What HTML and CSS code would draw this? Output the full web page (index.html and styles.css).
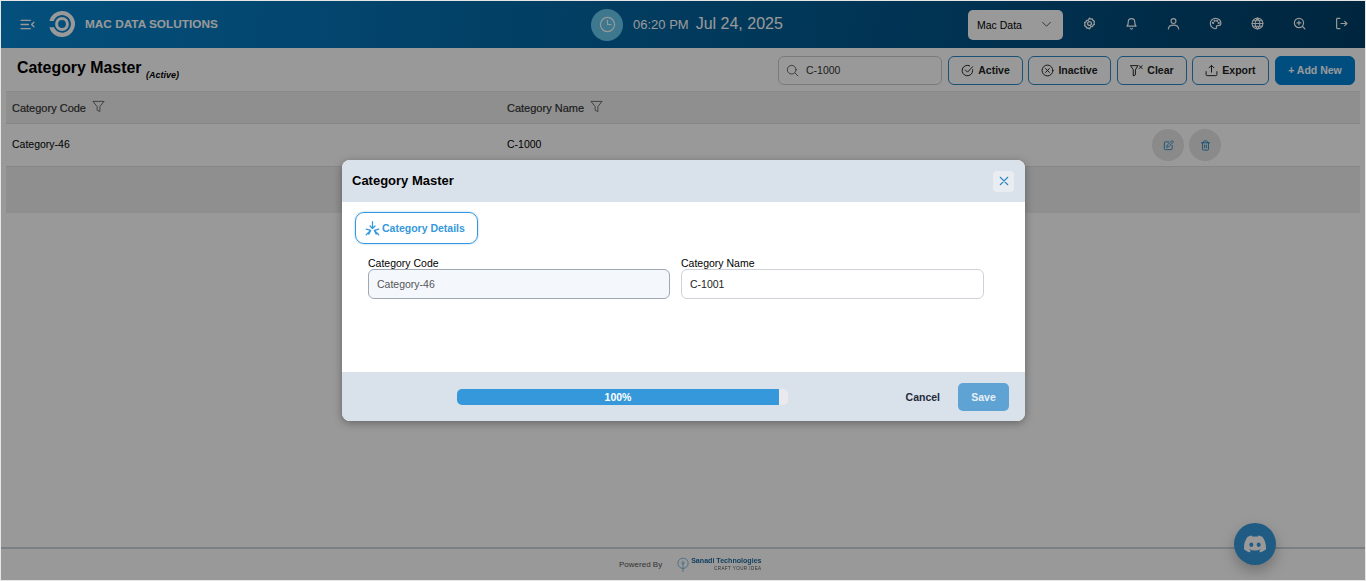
FILE: index.html
```html
<!doctype html>
<html lang="en">
<head>
  <meta charset="utf-8">
  <title>Category Master</title>
  <link rel="stylesheet" href="styles.css">
</head>
<body>
  <div class="app">
    <header class="topbar">
      <div class="brand">
        <svg class="menu-icon" viewBox="0 0 16 12" fill="none" stroke="currentColor" stroke-width="1.5" stroke-linecap="round" stroke-linejoin="round"><path d="M1 1.5h10M1 6h8M1 10.5h10M15 3.5 12.5 6l2.5 2.5"/></svg>
        <svg class="logo" viewBox="0 0 26 26"><path d="M13 0a13 13 0 1 1-12.6 16.2h4.6A8.8 8.8 0 1 0 4.8 10H.3A13 13 0 0 1 13 0z" fill="currentColor"/><circle cx="13" cy="13" r="5.4" fill="none" stroke="currentColor" stroke-width="3"/></svg>
        <span class="brand-name">MAC DATA SOLUTIONS</span>
      </div>
      <div class="clock">
        <span class="clock-badge">
          <svg viewBox="0 0 24 24" fill="none" stroke="currentColor" stroke-width="1.6" stroke-linecap="round" stroke-linejoin="round"><circle cx="12" cy="12" r="10"/><path d="M12 6v6h5"/></svg>
        </span>
        <span class="clock-time">06:20 PM</span>
        <span class="clock-date">Jul 24, 2025</span>
      </div>
      <div class="topbar-right">
        <div class="org-select">
          <span>Mac Data</span>
          <svg viewBox="0 0 12 8" fill="none" stroke="currentColor" stroke-width="1.1" stroke-linecap="round" stroke-linejoin="round"><path d="M1.5 1.5 6 6l4.5-4.5"/></svg>
        </div>
        <div class="top-icons">
          <svg viewBox="0 0 24 24" fill="none" stroke="currentColor" stroke-width="2.4" stroke-linejoin="round"><path d="M12 2l2.4 1.800 3-.2 1 2.700 2.600 1.500-.7 2.900.7 2.900-2.600 1.500-1 2.700-3-.2L12 22l-2.400-1.800-3 .2-1-2.700L3 16.200l.7-2.900L3 10.400 5.600 8.900l1-2.700 3 .2z"/><circle cx="12" cy="12" r="3.5"/></svg>
          <svg viewBox="0 0 24 24" fill="none" stroke="currentColor" stroke-width="2.2" stroke-linecap="round" stroke-linejoin="round"><path d="M6 9a6 6 0 0 1 12 0c0 6 2.5 8 2.5 8h-17S6 15 6 9z"/><path d="M10 21a2.2 2.2 0 0 0 4 0"/></svg>
          <svg viewBox="0 0 24 24" fill="none" stroke="currentColor" stroke-width="2.2" stroke-linecap="round" stroke-linejoin="round"><circle cx="12" cy="7.5" r="4.5"/><path d="M2.500 22c.5-4.500 4.500-7 9.500-7s9 2.500 9.500 7"/></svg>
          <svg viewBox="0 0 24 24" fill="none" stroke="currentColor" stroke-width="2.2" stroke-linecap="round" stroke-linejoin="round"><path d="M12 2.500c6 0 10 3.800 10 8.700 0 3.300-2.400 4.800-4.700 4.800h-2c-1.300 0-2 1.100-1.500 2.100.5 1.100.2 3.400-1.800 3.400-5.500 0-9.500-4.500-9.500-9.500s4-9.500 9.500-9.500z"/><circle cx="7.5" cy="11" r="1"/><circle cx="10.5" cy="7" r="1"/><circle cx="15" cy="7" r="1"/><circle cx="18" cy="11" r="1"/></svg>
          <svg viewBox="0 0 24 24" fill="none" stroke="currentColor" stroke-width="2" stroke-linecap="round" stroke-linejoin="round"><circle cx="12" cy="12" r="10"/><path d="M2 12h20M3.500 7h17M3.500 17h17M12 2c-6 6-6 14 0 20M12 2c6 6 6 14 0 20"/></svg>
          <svg viewBox="0 0 24 24" fill="none" stroke="currentColor" stroke-width="2.2" stroke-linecap="round" stroke-linejoin="round"><circle cx="11" cy="11" r="8.5"/><path d="M11 7.500v7M7.500 11h7M17.500 17.500l4.500 4.500"/></svg>
          <svg viewBox="0 0 24 24" fill="none" stroke="currentColor" stroke-width="2.2" stroke-linecap="round" stroke-linejoin="round"><path d="M9 2.500H4.500A1.500 1.500 0 0 0 3 4v16a1.500 1.500 0 0 0 1.500 1.500H9M11 12h11M18 8l4 4-4 4"/></svg>
        </div>
      </div>
    </header>

    <main class="content">
      <div class="toolbar">
        <h1 class="page-title">Category Master <small>(Active)</small></h1>
        <div class="actions">
          <div class="search">
            <svg viewBox="0 0 24 24" fill="none" stroke="currentColor" stroke-width="1.8" stroke-linecap="round"><circle cx="10.5" cy="10.5" r="8"/><path d="M16.500 16.500l5.500 5.500"/></svg>
            <span>C-1000</span>
          </div>
          <button class="btn btn-active">
            <svg viewBox="0 0 24 24" fill="none" stroke="currentColor" stroke-width="1.8" stroke-linecap="round" stroke-linejoin="round"><path d="M21.500 10.500V12A9.700 9.700 0 1 1 16 3.300"/><path d="M8 11l4 4 9.500-10"/></svg>
            Active
          </button>
          <button class="btn btn-inactive">
            <svg viewBox="0 0 24 24" fill="none" stroke="currentColor" stroke-width="1.8" stroke-linecap="round"><circle cx="12" cy="12" r="10"/><path d="M8.500 8.500l7 7M15.500 8.500l-7 7"/></svg>
            Inactive
          </button>
          <button class="btn btn-clear">
            <svg viewBox="0 0 24 24" fill="none" stroke="currentColor" stroke-width="1.8" stroke-linecap="round" stroke-linejoin="round"><path d="M1.500 3h13L10 11v9l-4 2V11zM17 3l5.500 5.500M22.500 3 17 8.500"/></svg>
            Clear
          </button>
          <button class="btn btn-export">
            <svg viewBox="0 0 24 24" fill="none" stroke="currentColor" stroke-width="1.8" stroke-linecap="round" stroke-linejoin="round"><path d="M12 15V2.500M7.500 7 12 2.500 16.500 7"/><path d="M2 14v5.500a2 2 0 0 0 2 2h16a2 2 0 0 0 2-2V14"/></svg>
            Export
          </button>
          <button class="btn btn-primary">+ Add New</button>
        </div>
      </div>

      <div class="table">
        <div class="table-row table-head">
          <div class="cell cell-code">Category Code
            <svg viewBox="0 0 14 14" fill="none" stroke="currentColor" stroke-linejoin="round"><path d="M1 1.500h12L8.500 7v5.500l-3-1.500V7z"/></svg>
          </div>
          <div class="cell cell-name">Category Name
            <svg viewBox="0 0 14 14" fill="none" stroke="currentColor" stroke-linejoin="round"><path d="M1 1.500h12L8.500 7v5.500l-3-1.500V7z"/></svg>
          </div>
        </div>
        <div class="table-row table-body">
          <div class="cell cell-code">Category-46</div>
          <div class="cell cell-name">C-1000</div>
          <div class="row-actions">
            <span class="round-btn">
              <svg viewBox="0 0 24 24" fill="none" stroke="currentColor" stroke-width="2" stroke-linecap="round" stroke-linejoin="round"><path d="M12 4H5a2 2 0 0 0-2 2v13a2 2 0 0 0 2 2h13a2 2 0 0 0 2-2v-7"/><path d="M18.500 2.500a2.100 2.100 0 0 1 3 3L12 15l-4 1 1-4z"/></svg>
            </span>
            <span class="round-btn">
              <svg viewBox="0 0 24 24" fill="none" stroke="currentColor" stroke-width="2" stroke-linecap="round" stroke-linejoin="round"><path d="M3 6h18M8 6V3.500A1.500 1.500 0 0 1 9.500 2h5A1.500 1.500 0 0 1 16 3.500V6M5.500 6v14a2 2 0 0 0 2 2h9a2 2 0 0 0 2-2V6M10 11v6M14 11v6"/></svg>
            </span>
          </div>
        </div>
        <div class="table-strip"></div>
      </div>
    </main>

    <footer class="footer">
      <span class="powered">Powered By</span>
      <div class="sanadi">
        <svg viewBox="0 0 14 18" fill="none" stroke="currentColor" stroke-width=".8"><circle cx="7" cy="7" r="6"/><path d="M7 4v13M5 6l2 2 2-2"/></svg>
        <div class="sanadi-text">
          <span class="sanadi-name">Sanadi Technologies</span>
          <span class="sanadi-tag">CRAFT YOUR IDEA</span>
        </div>
      </div>
    </footer>

    <span class="chat-bubble">
      <svg viewBox="0 0 24 24" fill="currentColor"><path d="M20.317 4.3698a19.7913 19.7913 0 00-4.8851-1.5152.0741.0741 0 00-.0785.0371c-.211.3753-.4447.8648-.6083 1.2495-1.8447-.2762-3.68-.2762-5.4868 0-.1636-.3933-.4058-.8742-.6177-1.2495a.077.077 0 00-.0785-.037 19.7363 19.7363 0 00-4.8852 1.515.0699.0699 0 00-.0321.0277C.5334 9.0458-.319 13.5799.0992 18.0578a.0824.0824 0 00.0312.0561c2.0528 1.5076 4.0413 2.4228 5.9929 3.0294a.0777.0777 0 00.0842-.0276c.4616-.6304.8731-1.2952 1.226-1.9942a.076.076 0 00-.0416-.1057c-.6528-.2476-1.2743-.5495-1.8722-.8923a.077.077 0 01-.0076-.1277c.1258-.0943.2517-.1923.3718-.2914a.0743.0743 0 01.0776-.0105c3.9278 1.7933 8.18 1.7933 12.0614 0a.0739.0739 0 01.0785.0095c.1202.099.246.1981.3728.2924a.077.077 0 01-.0066.1276 12.2986 12.2986 0 01-1.873.8914.0766.0766 0 00-.0407.1067c.3604.698.7719 1.3628 1.225 1.9932a.076.076 0 00.0842.0286c1.961-.6067 3.9495-1.5219 6.0023-3.0294a.077.077 0 00.0313-.0552c.5004-5.177-.8382-9.6739-3.5485-13.6604a.061.061 0 00-.0312-.0286zM8.02 15.3312c-1.1825 0-2.1569-1.0857-2.1569-2.419 0-1.3332.9555-2.4189 2.157-2.4189 1.2108 0 2.1757 1.0952 2.1568 2.419 0 1.3332-.9555 2.4189-2.1569 2.4189zm7.9748 0c-1.1825 0-2.1569-1.0857-2.1569-2.419 0-1.3332.9554-2.4189 2.1569-2.4189 1.2108 0 2.1757 1.0952 2.1568 2.419 0 1.3332-.946 2.4189-2.1568 2.4189Z"/></svg>
    </span>

    <div class="overlay">
      <div class="modal">
        <div class="modal-head">
          <h2 class="modal-title">Category Master</h2>
          <span class="modal-close">
            <svg viewBox="0 0 12 12" fill="none" stroke="currentColor" stroke-width="1.3" stroke-linecap="round"><path d="M1.500 1.500l9 9M10.500 1.500l-9 9"/></svg>
          </span>
        </div>
        <div class="modal-body">
          <div class="tab">
            <svg viewBox="0 0 24 24" fill="none" stroke="currentColor" stroke-width="2" stroke-linecap="round" stroke-linejoin="round"><path d="M12 1v11M8 8l4 4 4-4M2 13l7 2-3 6M9 15l-7 7M22 13l-7 2 3 6M15 15l7 7"/></svg>
            Category Details
          </div>
          <div class="fields">
            <label class="field field-code">
              <span class="field-label">Category Code</span>
              <input class="field-input field-input-locked" value="Category-46" readonly>
            </label>
            <label class="field field-name">
              <span class="field-label">Category Name</span>
              <input class="field-input" value="C-1001">
            </label>
          </div>
        </div>
        <div class="modal-foot">
          <div class="progress"><div class="progress-fill">100%</div></div>
          <span class="cancel">Cancel</span>
          <button class="save">Save</button>
        </div>
      </div>
    </div>
  </div>
</body>
</html>
```

FILE: styles.css
```css
* {
  box-sizing: border-box;
}
html, body {
  margin: 0;
  height: 100%;
}
body {
  font-family: "Liberation Sans", Arial, sans-serif;
  color: #000;
  background-color: #fff;
  overflow: hidden;
}
svg {
  display: block;
  flex: none;
}
.app {
  position: relative;
  display: flex;
  flex-direction: column;
  height: 581px;
  border: 1px solid #e6e6e6;
  overflow: hidden;
}

/* top bar */
.topbar {
  display: flex;
  align-items: center;
  height: 47px;
  flex: none;
  color: #fff;
  background: linear-gradient(100deg, #0785cf 0%, #003f69 100%);
}
.brand {
  display: flex;
  align-items: center;
  width: 590px;
  padding-left: 19px;
  padding-bottom: 1px;
}
.menu-icon {
  width: 15px;
  height: 11px;
}
.logo {
  width: 26px;
  height: 26px;
  margin-left: 14px;
}
.brand-name {
  margin-left: 10px;
  margin-bottom: 1px;
  font-size: 11.8px;
  font-weight: 700;
}
.clock {
  display: flex;
  align-items: center;
  width: 377px;
}
.clock-badge {
  display: flex;
  align-items: center;
  justify-content: center;
  width: 32px;
  height: 32px;
  border-radius: 50%;
  background-color: #68c8ee;
}
.clock-badge svg {
  width: 17px;
  height: 17px;
}
.clock-time {
  margin-left: 10px;
  font-size: 13px;
}
.clock-date {
  margin-left: 7px;
  font-size: 16px;
  padding-bottom: 1px;
}
.topbar-right {
  display: flex;
  align-items: center;
}
.org-select {
  display: flex;
  align-items: center;
  justify-content: space-between;
  width: 95px;
  height: 30px;
  padding: 0 11px 0 9px;
  color: #000;
  font-size: 10.5px;
  border-radius: 5px;
  background-color: #fff;
}
.org-select svg {
  width: 11px;
  height: 7px;
  color: #555;
}
.top-icons {
  display: flex;
  align-items: center;
  gap: 29px;
  margin-left: 20px;
  padding-bottom: 2px;
}
.top-icons svg {
  width: 13px;
  height: 13px;
}

/* page content */
.content {
  flex: 1;
  padding: 0 5px;
}
.toolbar {
  display: flex;
  align-items: center;
  justify-content: space-between;
  height: 43px;
  padding: 1px 5px 0 11px;
}
.page-title {
  margin: 0 0 4px;
  font-size: 15.9px;
  font-weight: 700;
}
.page-title small {
  position: relative;
  top: 5px;
  font-size: 9px;
  font-style: italic;
}
.actions {
  display: flex;
  align-items: center;
  gap: 5px;
}
.search {
  display: flex;
  align-items: center;
  width: 164px;
  height: 29px;
  margin-right: 1px;
  padding-left: 7px;
  font-size: 10.5px;
  color: #333;
  border: 1px solid #ccc;
  border-radius: 6px;
}
.search svg {
  width: 13px;
  height: 13px;
  margin-right: 7px;
  color: #666;
}
.btn {
  display: flex;
  align-items: center;
  justify-content: center;
  gap: 4px;
  height: 29px;
  padding: 0;
  font-family: inherit;
  font-size: 10.5px;
  font-weight: 700;
  color: #222;
  background-color: #fff;
  border: 1px solid #2b86c5;
  border-radius: 6px;
}
.btn svg {
  width: 13px;
  height: 13px;
}
.btn-active {
  width: 75px;
}
.btn-inactive {
  width: 83px;
}
.btn-clear {
  width: 70px;
  margin-left: 1px;
}
.btn-export {
  width: 77px;
}
.btn-primary {
  width: 80px;
  margin-left: 1px;
  color: #fff;
  background-color: #0083d5;
  border-color: #0083d5;
}

/* table */
.table {
  border-top: 1px solid #e4e4e4;
}
.table-row {
  display: flex;
  align-items: center;
}
.table-head {
  height: 32px;
  padding-top: 1px;
  color: #333;
  font-size: 11px;
  -webkit-text-stroke: 0.2px #333;
  background-color: #eee;
  border-bottom: 1px solid #e0e0e0;
}
.table-body {
  height: 43px;
  font-size: 10.5px;
  border-bottom: 1px solid #e0e0e0;
}
.table-body .cell {
  margin-top: -2px;
}
.table-strip {
  height: 46px;
  background-color: #eee;
}
.cell {
  display: flex;
  align-items: center;
  gap: 6px;
  padding-left: 6px;
}
.cell svg {
  width: 13px;
  height: 13px;
  margin-top: -3px;
  color: #666;
}
.cell-code {
  width: 495px;
}
.cell-name {
  width: 645px;
}
.row-actions {
  display: flex;
  gap: 5px;
  margin-left: 6px;
}
.round-btn {
  display: flex;
  align-items: center;
  justify-content: center;
  width: 32px;
  height: 32px;
  color: #2b86c5;
  border-radius: 50%;
  background-color: #e6e6e6;
}
.round-btn svg {
  width: 11px;
  height: 11px;
}

/* footer */
.footer {
  display: flex;
  align-items: center;
  height: 33px;
  flex: none;
  padding-left: 618px;
  border-top: 2px solid #cfd5da;
}
.powered {
  font-size: 8px;
  color: #555;
}
.sanadi {
  display: flex;
  align-items: center;
  gap: 2px;
  margin-left: 15px;
  color: #4f9fd6;
  filter: blur(0.3px);
}
.sanadi svg {
  width: 12px;
  height: 16px;
}
.sanadi-text {
  display: flex;
  flex-direction: column;
  align-items: flex-end;
  line-height: 7px;
}
.sanadi-name {
  font-size: 7.1px;
  font-weight: 700;
  color: #1d6a9d;
}
.sanadi-tag {
  font-size: 4.5px;
  letter-spacing: 0.45px;
  color: #555;
}
.chat-bubble {
  position: absolute;
  left: 1233px;
  top: 522px;
  display: flex;
  align-items: center;
  justify-content: center;
  width: 42px;
  height: 42px;
  color: #fff;
  border-radius: 50%;
  background-color: #3498db;
  box-shadow: 0 6px 14px rgba(0, 0, 0, 0.25);
}
.chat-bubble svg {
  width: 22px;
  height: 22px;
}

/* modal */
.overlay {
  position: absolute;
  inset: 0;
  display: flex;
  justify-content: center;
  align-items: flex-start;
  padding-top: 159px;
  background-color: rgba(0, 0, 0, 0.4);
}
.modal {
  width: 683px;
  margin-left: 1px;
  border-radius: 8px;
  overflow: hidden;
  background-color: #fff;
  box-shadow: 0 2px 8px rgba(0, 0, 0, 0.35);
}
.modal-head {
  display: flex;
  align-items: center;
  justify-content: space-between;
  height: 42px;
  padding: 0 11px 0 10px;
  background-color: #d9e1ea;
}
.modal-title {
  margin: 0 0 2px;
  font-size: 13px;
  font-weight: 700;
}
.modal-close {
  display: flex;
  align-items: center;
  justify-content: center;
  width: 21px;
  height: 21px;
  color: #2b86c5;
  border-radius: 4px;
  background-color: #e9edf1;
}
.modal-close svg {
  width: 10px;
  height: 10px;
}
.modal-body {
  height: 170px;
  padding: 10px 13px 0;
}
.tab {
  display: inline-flex;
  align-items: center;
  gap: 2px;
  height: 32px;
  padding: 0 12px 0 9px;
  color: #3498db;
  font-size: 10.5px;
  font-weight: 700;
  border: 1px solid #3498db;
  border-radius: 9px;
  box-shadow: 0 0 2px rgba(52, 152, 219, 0.6);
}
.tab svg {
  width: 15px;
  height: 15px;
}
.fields {
  display: flex;
  gap: 11px;
  margin-top: 13px;
  padding-left: 13px;
}
.field {
  display: flex;
  flex-direction: column;
}
.field-code {
  width: 302px;
}
.field-name {
  width: 303px;
}
.field-label {
  height: 12px;
  font-size: 10.5px;
  line-height: 13px;
}
.field-input {
  height: 30px;
  padding: 0 8px;
  font-family: inherit;
  font-size: 10.5px;
  color: #222;
  border: 1px solid #cfd2dc;
  border-radius: 6px;
  outline: none;
  background-color: #fff;
}
.field-input-locked {
  color: #555;
  border-color: #9fa8b4;
  background-color: #f4f8fd;
}
.modal-foot {
  display: flex;
  align-items: center;
  height: 49px;
  padding: 0 16px 0 115px;
  background-color: #d9e1ea;
}
.progress {
  width: 331px;
  height: 16px;
  border-radius: 5px;
  overflow: hidden;
  background-color: #e9e9ee;
}
.progress-fill {
  width: 322px;
  height: 16px;
  color: #fff;
  font-size: 10.5px;
  font-weight: 700;
  line-height: 16px;
  text-align: center;
  background-color: #3498db;
}
.cancel {
  margin-left: auto;
  font-size: 10.5px;
  font-weight: 700;
  color: #1f2a3a;
}
.save {
  width: 51px;
  height: 28px;
  margin-left: 18px;
  font-family: inherit;
  font-size: 10.5px;
  font-weight: 700;
  color: #e8f0f7;
  border: none;
  border-radius: 5px;
  background-color: #5fa3d4;
}
```
